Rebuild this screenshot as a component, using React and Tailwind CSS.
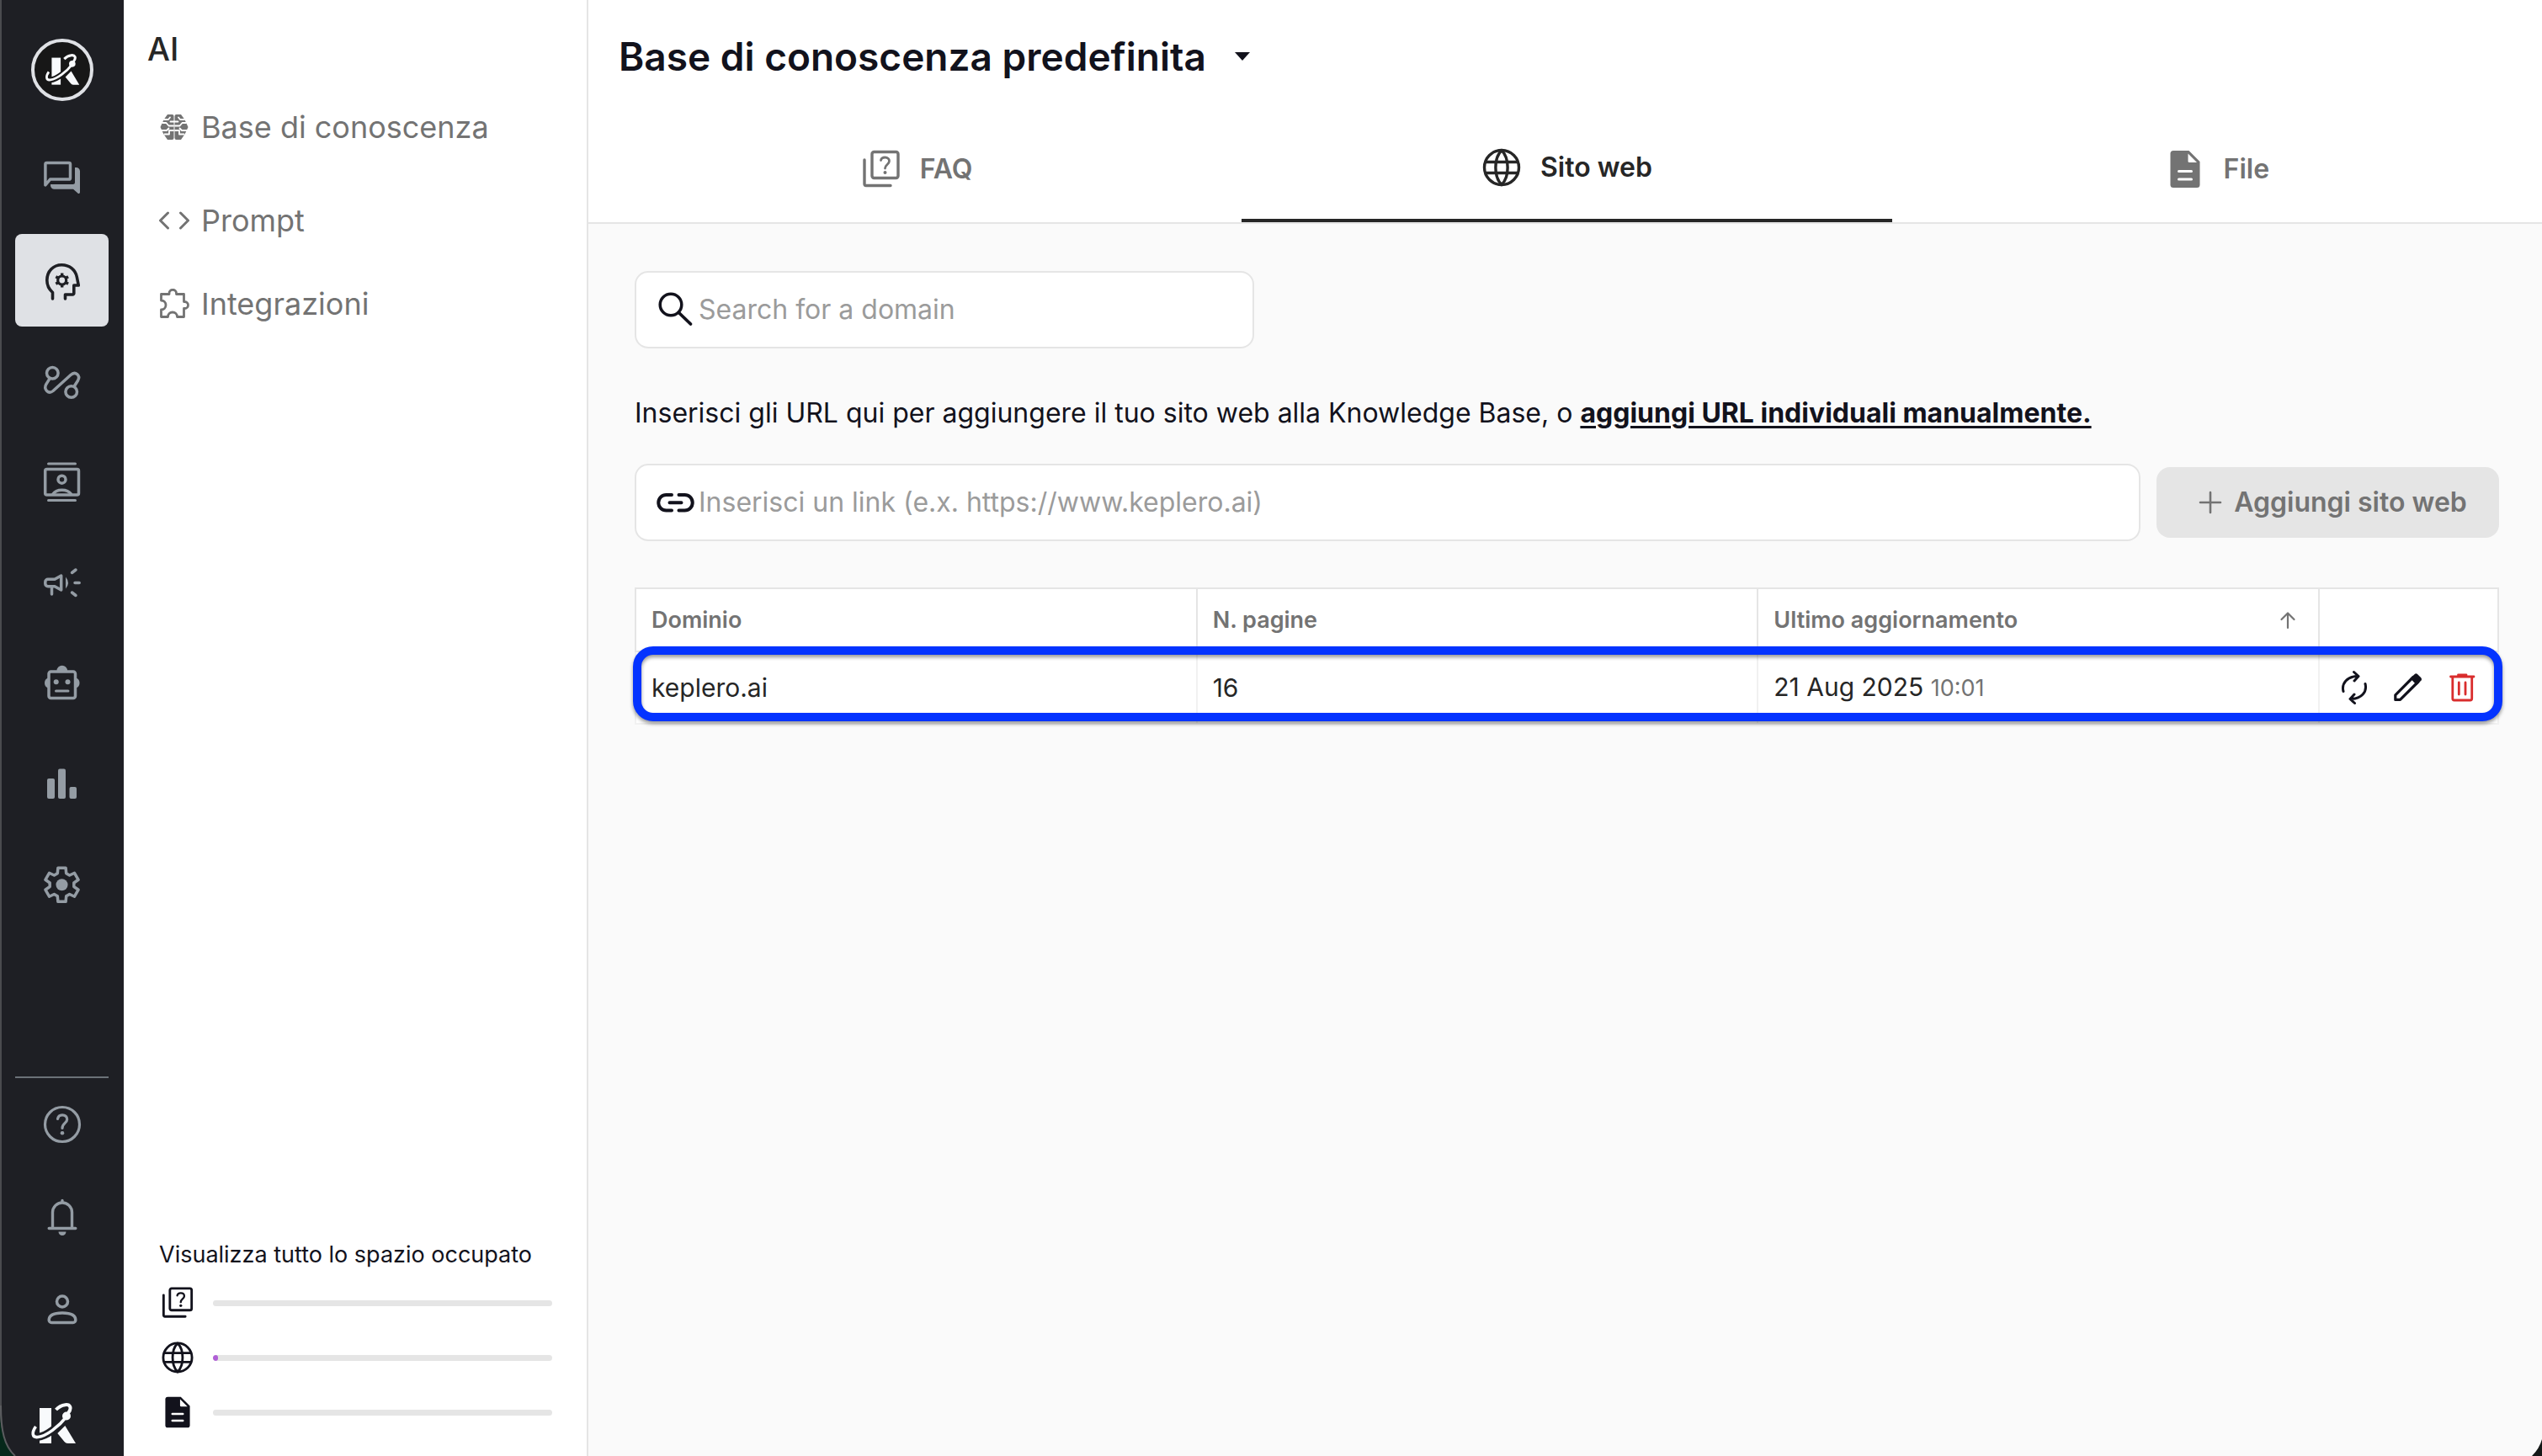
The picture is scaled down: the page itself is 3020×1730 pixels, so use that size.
import React from "react";

function Svg({ className = "size-12", box = "0 0 48 48", sw = 3.5, children }) {
  return (
    <svg
      className={className}
      viewBox={box}
      fill="none"
      stroke="currentColor"
      strokeWidth={sw}
      strokeLinecap="round"
      strokeLinejoin="round"
      aria-hidden="true"
    >
      {children}
    </svg>
  );
}

/* Brand mark: a K crossed by an orbit. */
function Logo({ className, ground }) {
  const orbit = "M6.5 28C1.5 35 2 41.5 9 40.5C19 39.5 34 28 43.3 15.8";
  const loop = "M45 12C50 5.5 47 1.5 41.5 2.2C37 2.8 33.5 4.8 30.5 8";
  return (
    <svg className={className} viewBox="0 0 55 49" fill="none" aria-hidden="true">
      <path d="M11 6H25V48H11z" fill="#f8fafc" />
      <path d="M32.3 36L41.3 27L54 48H44.5Q42 48 40.5 46z" fill="#f8fafc" />
      <path d={orbit} stroke={ground} strokeWidth="9" />
      <path d={orbit} stroke="#f8fafc" strokeWidth="3.6" />
      <path d={loop} stroke="#f8fafc" strokeWidth="4" />
      <circle cx="43" cy="15.5" r="5" fill="#f8fafc" />
    </svg>
  );
}

const ChatIcon = () => (
  <Svg>
    <path d="M3.9 31V6a1.6 1.6 0 0 1 1.6-1.6H31.9a1.6 1.6 0 0 1 1.6 1.6V22.5a1.6 1.6 0 0 1-1.6 1.6H9.5z" />
    <path
      stroke="none"
      fill="currentColor"
      d="M10 30H36.5a2.5 2.5 0 0 0 2.5-2.5V10h1.5a4.5 4.5 0 0 1 4.5 4.5V39.5a1.5 1.5 0 0 1-2.6 1L37 35.8H14.5a4.5 4.5 0 0 1-4.5-4.5z"
    />
  </Svg>
);

const HeadIcon = () => (
  <Svg sw={3.6}>
    <path d="M12.5 46V38.5C8 34.5 5.8 29.5 5.8 24C5.8 13 13.5 5.7 23.2 5.7C33 5.7 39.8 12 41.3 20L43.3 30H37.8V39.5a1.5 1.5 0 0 1-1.5 1.5H27.5V46" />
    <circle cx="23.7" cy="24" r="5" strokeWidth="3.2" />
    {[0, 60, 120, 180, 240, 300].map((a) => (
      <path key={a} strokeWidth="3.4" strokeLinecap="butt" transform={`rotate(${a} 23.7 24)`} d="M23.7 19V15.5" />
    ))}
  </Svg>
);

const RouteIcon = () => (
  <Svg>
    <circle cx="12.3" cy="14.3" r="6.8" />
    <circle cx="34.7" cy="36.5" r="6.8" />
    <path d="M9 20.8L4.8 27.6C1.5 33.5 7.5 40 13 35.5L34 16.5C39.5 11.5 46 17 42.5 23.2L38.2 30" />
  </Svg>
);

const ContactIcon = () => (
  <Svg>
    <path strokeWidth="3" d="M7.5 2H39.5M7.5 45.5H39.5" />
    <rect x="3.7" y="8.5" width="39.8" height="30.5" rx="2" />
    <circle cx="23.5" cy="20.7" r="4.5" />
    <path d="M13 38C17 31.5 30 31.5 34.5 38" />
  </Svg>
);

const MegaphoneIcon = () => (
  <Svg>
    <path d="M7 19.3H15L22.7 15V32L15 27.7H7A3.2 3.2 0 0 1 3.8 24.5V22.5A3.2 3.2 0 0 1 7 19.3z" />
    <path d="M11.5 28V37M35.5 11.5L40 8M39 23.5H44.2M35.5 35L40 38.5" />
    <path stroke="none" fill="currentColor" d="M28 16.5Q34 23.5 28 30.5z" />
  </Svg>
);

const RobotIcon = () => (
  <Svg>
    <rect x="8" y="9" width="31.5" height="31.5" rx="2.5" />
    <g stroke="none" fill="currentColor">
      <path d="M17.5 8a6 6 0 0 1 12.5 0z" />
      <path d="M7 16.5a6.5 6.5 0 0 0 0 12z" />
      <path d="M40.5 16.5a6.5 6.5 0 0 1 0 12z" />
      <circle cx="16.7" cy="21.2" r="3" />
      <circle cx="30.5" cy="21.2" r="3" />
    </g>
    <path strokeWidth="3" d="M16.5 32H31" />
  </Svg>
);

const BarsIcon = () => (
  <Svg>
    <g stroke="none" fill="currentColor">
      <rect x="6" y="16" width="9" height="24" rx="2" />
      <rect x="19" y="4.5" width="9" height="35.5" rx="2" />
      <rect x="32.5" y="26" width="8.5" height="14" rx="2" />
    </g>
  </Svg>
);

const gearPath =
  [0, 60, 120, 180, 240, 300]
    .flatMap((a) => [
      [a - 21, 14.5],
      [a - 13, 20.5],
      [a + 13, 20.5],
      [a + 21, 14.5],
    ])
    .map(([a, r], i) => {
      const t = (a * Math.PI) / 180;
      return `${i ? "L" : "M"}${(23.5 + r * Math.sin(t)).toFixed(2)} ${(22.25 - r * Math.cos(t)).toFixed(2)}`;
    })
    .join("") + "z";

const GearIcon = () => (
  <Svg>
    <path d={gearPath} />
    <circle cx="23.5" cy="22.25" r="7" stroke="none" fill="currentColor" />
  </Svg>
);

const HelpIcon = () => (
  <Svg sw={3.2}>
    <circle cx="24" cy="24" r="20.5" />
    <path d="M18.5 17.5C19 14.3 21 12.8 24 12.8C27.5 12.8 29.7 15 29.7 18C29.7 22.5 24 22.5 24 28.5" />
    <circle cx="24" cy="34.3" r="2.3" stroke="none" fill="currentColor" />
  </Svg>
);

const BellIcon = () => (
  <Svg sw={3.4}>
    <path d="M12.5 37V18.5a11.5 11.5 0 0 1 23 0V37M8.2 37.5H39.8M24 7V4.5" />
    <path stroke="none" fill="currentColor" d="M19.5 41.5h9a4.5 4.5 0 0 1-9 0z" />
  </Svg>
);

const PersonIcon = () => (
  <Svg>
    <circle cx="24" cy="14.5" r="6.5" />
    <path d="M8.2 36.5C8.2 30 15 28 24 28S39.8 30 39.8 36.5a3 3 0 0 1-3 3H11.2a3 3 0 0 1-3-3z" />
  </Svg>
);

const BrainIcon = () => (
  <Svg className="size-9" box="0 0 36 36" sw={1.8}>
    <path
      stroke="none"
      fill="currentColor"
      d="M10 3H15.5q2 0 2 2V31q0 2-2 2H10L5.5 26.5L4 23.5L1.5 18L4 12.5L6 8.5zM26 3H20.5q-2 0-2 2V31q0 2 2 2H26L30.5 26.5L32 23.5L34.5 18L32 12.5L30 8.5z"
    />
    <path
      stroke="#ffffff"
      d="M6 9H11L13 6.5M30 9H25L23 6.5M4 13H8.5L11.5 16.5H17M32 13H27.5L24.5 16.5H19M3 22H9L11.5 19.5M33 22H27L24.5 19.5M6.5 26.5H12V22H17M29.5 26.5H24V22H19M13.5 11.5H18M22.5 11.5H18"
    />
  </Svg>
);

const CodeIcon = () => (
  <Svg className="size-9" box="0 0 36 36" sw={3}>
    <path d="M10.5 9L1.5 18L10.5 27M25.5 9L34.5 18L25.5 27" />
  </Svg>
);

const PuzzleIcon = () => (
  <Svg className="size-9" box="0 0 36 36" sw={2.8}>
    <path d="M2.5 6.5H12V5.5a4 4 0 0 1 8.5 0V6.5H29.5V15.5h1a3.9 3.9 0 0 1 0 8h-1V33.5H21.5a5.5 5.5 0 0 0-11 0H2.5V25a5.3 5.3 0 0 0 0-11z" />
  </Svg>
);

const QuizIcon = ({ className }) => (
  <Svg className={className} sw={3.4}>
    <rect x="13" y="3.5" width="31" height="31" rx="2.5" />
    <path d="M4 13V41.5a2 2 0 0 0 2 2H35" />
    <path d="M23.5 13.5C24 11 26 10 28.5 10C31.5 10 33.5 11.8 33.5 14.3C33.5 18.5 28.5 18.5 28.5 23" strokeWidth="2.8" />
    <circle cx="28.5" cy="28" r="2" stroke="none" fill="currentColor" />
  </Svg>
);

const GlobeIcon = ({ className }) => (
  <Svg className={className} sw={3.4}>
    <circle cx="24" cy="24" r="20.5" />
    <path d="M24 3.5C14.5 13 14.5 35 24 44.5C33.5 35 33.5 13 24 3.5zM5 17.5H43M5 30.5H43" />
  </Svg>
);

const FileIcon = ({ className }) => (
  <Svg className={className}>
    <path stroke="none" fill="currentColor" d="M10 2H28.5L41.5 15V42.5a3.5 3.5 0 0 1-3.5 3.5H10a3.5 3.5 0 0 1-3.5-3.5V5.5A3.5 3.5 0 0 1 10 2z" />
    <path stroke="none" fill="#ffffff" d="M27.5 5.5V14.5a1.5 1.5 0 0 0 1.5 1.5H38z" />
    <path stroke="#ffffff" strokeWidth="3" d="M16.5 26.5H31.5M16.5 36H31.5" />
  </Svg>
);

const SearchIcon = () => (
  <Svg>
    <circle cx="19" cy="18" r="12.8" />
    <path d="M28.5 27.5L42.5 41" strokeWidth="3.8" />
  </Svg>
);

const LinkIcon = () => (
  <Svg sw={4}>
    <path d="M20 15H13.500a9 9 0 0 0 0 18.500H20M28.500 15H35.500a9 9 0 0 1 0 18.500H28.500M17.500 24.200H31.500" />
  </Svg>
);

const refreshHalf = "M11 28.5C8.5 19 15.5 10.5 28 10.5M23.5 5.5L29 10.5L24 16";

const RefreshIcon = () => (
  <Svg sw={3}>
    <path d={refreshHalf} />
    <path transform="rotate(180 24 24)" d={refreshHalf} />
  </Svg>
);

const PencilIcon = () => (
  <Svg sw={3.2}>
    <path d="M8.8 38.4V32.8L30 11.5L36 17L14.5 38.4z" />
    <path stroke="none" fill="currentColor" d="M26.5 13L32 7.7Q33.5 6.7 35 8L39.3 12.3Q40.8 14 39.5 15.5L34 21z" />
  </Svg>
);

const TrashIcon = () => (
  <Svg sw={2.8}>
    <path d="M10.5 11H38M19.5 9H29M12.8 11.5V37a2 2 0 0 0 2 2H33.7a2 2 0 0 0 2-2V11.5M20.3 18V32M28 18V32" />
  </Svg>
);

const railTop = [
  ["Conversazioni", ChatIcon],
  ["AI", HeadIcon],
  ["Flussi", RouteIcon],
  ["Contatti", ContactIcon],
  ["Campagne", MegaphoneIcon],
  ["Bot", RobotIcon],
  ["Statistiche", BarsIcon],
  ["Impostazioni", GearIcon],
];

const railBottom = [
  ["Aiuto", HelpIcon],
  ["Notifiche", BellIcon],
  ["Profilo", PersonIcon],
];

const storage = [
  ["FAQ", QuizIcon, 0],
  ["Sito web", GlobeIcon, 1.4],
  ["File", FileIcon, 0],
];

const railButton = "flex h-[110px] w-full items-center justify-center rounded-lg";

function Rail() {
  return (
    <aside className="flex w-[147px] shrink-0 flex-col border-l-2 border-[#4a4b4e] bg-[#1e1f24] pr-[18px] pl-4 text-[#949ca4]">
      <div className="mt-[46px] mb-[38px] flex size-[74px] items-center justify-center self-center rounded-full border-4 border-[#dfe1e5] bg-[#171717]">
        <Logo className="w-[42px]" ground="#171717" />
      </div>
      <nav aria-label="Principale" className="flex flex-col gap-2.5">
        {railTop.map(([name, Icon]) => (
          <button
            key={name}
            type="button"
            aria-label={name}
            className={name === "AI" ? `${railButton} bg-[#dfe1e5] text-[#1e1f24]` : railButton}
          >
            <Icon />
          </button>
        ))}
      </nav>
      <div className="mt-auto flex flex-col border-t-2 border-[#6b7278]">
        {railBottom.map(([name, Icon]) => (
          <button key={name} type="button" aria-label={name} className={railButton}>
            <Icon />
          </button>
        ))}
      </div>
      <Logo className="mt-14 mb-3.5 ml-[18px] w-[55px]" ground="#1e1f24" />
    </aside>
  );
}

function Sidebar() {
  const item = "flex h-[54px] items-center gap-3.5";
  return (
    <aside className="flex w-[552px] shrink-0 flex-col border-r-2 border-[#e5e5e5] bg-white pr-10 pl-[42px]">
      <h1 className="mt-8 -ml-3.5 text-[38px] leading-[52px] font-medium text-[#262626]">AI</h1>
      <nav aria-label="AI" className="mt-10 flex flex-col gap-[45px] text-[36px] leading-[54px] text-[#737373]">
        <a href="#base" className={`${item} mb-3`}>
          <BrainIcon />
          Base di conoscenza
        </a>
        <a href="#prompt" className={item}>
          <CodeIcon />
          Prompt
        </a>
        <a href="#integrazioni" className={item}>
          <PuzzleIcon />
          Integrazioni
        </a>
      </nav>
      <section className="mt-auto pb-8 text-[#12121c]">
        <h2 className="mb-[19px] text-[27px] leading-9">Visualizza tutto lo spazio occupato</h2>
        <ul className="flex flex-col gap-[25px] pl-0.5">
          {storage.map(([name, Icon, value]) => (
            <li key={name} className="flex h-10 items-center gap-[22px]">
              <Icon className="size-10" />
              <div
                role="progressbar"
                aria-label={name}
                aria-valuenow={value}
                className="h-[7px] w-[403px] overflow-hidden rounded-full bg-[#e5e5e5]"
              >
                <div className="h-full rounded-full bg-[#b05fd6]" style={{ width: `${value}%` }} />
              </div>
            </li>
          ))}
        </ul>
      </section>
    </aside>
  );
}

function Tabs() {
  const tab = "flex items-center justify-center gap-[22px] font-semibold";
  return (
    <div role="tablist" className="mt-auto grid h-[127px] grid-cols-3 pl-1 text-[32px] leading-[48px] text-[#737373]">
      <button type="button" role="tab" aria-selected="false" className={tab}>
        <QuizIcon className="size-12" />
        FAQ
      </button>
      <button type="button" role="tab" aria-selected="true" className={`${tab} border-b-4 border-[#262626] text-[#262626]`}>
        <GlobeIcon className="size-12" />
        Sito web
      </button>
      <button type="button" role="tab" aria-selected="false" className={tab}>
        <FileIcon className="size-12" />
        File
      </button>
    </div>
  );
}

const field =
  "flex h-[92px] items-center gap-1 rounded-2xl border-2 border-[#e5e5e5] bg-white px-[22px] text-[32px] text-[#12121c]";
const input = "min-w-0 grow bg-transparent outline-none placeholder:text-[#9b9b9b]";

function DomainTable() {
  const th = "h-[75px] border-2 border-[#e5e5e5] px-[18px] text-left font-semibold";
  const td = "h-[86px] border-2 border-[#f1f1f1] px-[18px]";
  return (
    <div className="relative mt-[55px]">
      <table className="w-full table-fixed border-collapse bg-white">
        <thead className="text-[27px] leading-9 text-[#737373]">
          <tr>
            <th className={th}>Dominio</th>
            <th className={th}>N. pagine</th>
            <th className={th}>
              <span className="flex items-center justify-between">
                Ultimo aggiornamento
                <button type="button" aria-label="Ordina" className="mr-1.5">
                  <Svg className="size-6" box="0 0 24 24" sw={2.2}>
                    <path d="M12 21V4M4.5 11L12 3.5L19.5 11" />
                  </Svg>
                </button>
              </span>
            </th>
            <th className={`${th} w-[213px]`} aria-label="Azioni" />
          </tr>
        </thead>
        <tbody className="text-[30px] leading-9 text-[#262626]">
          <tr>
            <td className={td}>keplero.ai</td>
            <td className={td}>16</td>
            <td className={td}>
              21 Aug 2025 <span className="text-[27px] text-[#737373]">10:01</span>
            </td>
            <td className="border-2 border-[#f1f1f1] pl-[17px]">
              <div className="flex gap-4 text-[#12121c]">
                <button type="button" aria-label="Aggiorna">
                  <RefreshIcon />
                </button>
                <button type="button" aria-label="Modifica">
                  <PencilIcon />
                </button>
                <button type="button" aria-label="Elimina" className="text-[#d92d2d]">
                  <TrashIcon />
                </button>
              </div>
            </td>
          </tr>
        </tbody>
      </table>
      <div className="pointer-events-none absolute -right-1 bottom-1 -left-0.5 h-[89px] rounded-3xl border-10 border-[#0433ff] drop-shadow-[0_3px_2px_rgba(0,0,0,0.4)]" />
    </div>
  );
}

export default function App() {
  return (
    <div className="relative flex min-h-screen bg-white font-['Inter',sans-serif]">
      <Rail />
      <Sidebar />
      <main className="flex min-w-0 grow flex-col bg-[#fafafa] text-[#12121c]">
        <header className="flex h-[266px] flex-col border-b-2 border-[#e5e5e5] bg-white">
          <button type="button" className="mt-[35px] ml-9 flex items-center gap-[34px] self-start text-[46px] leading-[64px] font-semibold">
            Base di conoscenza predefinita
            <svg className="h-2.5 w-[18px]" viewBox="0 0 18 10" aria-hidden="true">
              <path d="M0 0H18L9 10z" fill="currentColor" />
            </svg>
          </button>
          <Tabs />
        </header>
        <section className="pt-14 pr-[51px] pl-[55px]">
          <label className={`${field} w-[736px]`}>
            <SearchIcon />
            <input type="search" aria-label="Search for a domain" placeholder="Search for a domain" className={input} />
          </label>
          <p className="mt-[53px] text-[32px] leading-[48px]">
            Inserisci gli URL qui per aggiungere il tuo sito web alla Knowledge Base, o{" "}
            <a href="#manuale" className="font-bold underline decoration-3 underline-offset-4">
              aggiungi URL individuali manualmente.
            </a>
          </p>
          <form className="mt-9 flex items-center gap-[19px]">
            <label className={`${field} grow`}>
              <LinkIcon />
              <input
                type="url"
                aria-label="Inserisci un link"
                placeholder="Inserisci un link (e.x. https://www.keplero.ai)"
                className={input}
              />
            </label>
            <button
              type="button"
              className="flex h-[84px] w-[407px] items-center justify-center gap-2.5 rounded-2xl bg-[#e5e5e5] pl-2 text-[32px] font-semibold text-[#737373]"
            >
              <Svg className="size-9" box="0 0 36 36" sw={2.6}>
                <path d="M18 6V30M6 18H30" />
              </Svg>
              Aggiungi sito web
            </button>
          </form>
          <DomainTable />
        </section>
      </main>
      <svg className="pointer-events-none absolute bottom-0 left-0 h-[60px] w-6" viewBox="0 0 24 60" aria-hidden="true">
        <path d="M0 10C1 32 6 48 18 60H0z" fill="#06281a" />
        <path d="M1 0C1 30 5 48 18 60" fill="none" stroke="#5b5c5f" strokeWidth="2" />
      </svg>
      <svg className="pointer-events-none absolute right-0 bottom-0 h-5 w-3" viewBox="0 0 12 20" aria-hidden="true">
        <path d="M12 0Q9 11 0 20H12z" fill="#141817" />
      </svg>
    </div>
  );
}
